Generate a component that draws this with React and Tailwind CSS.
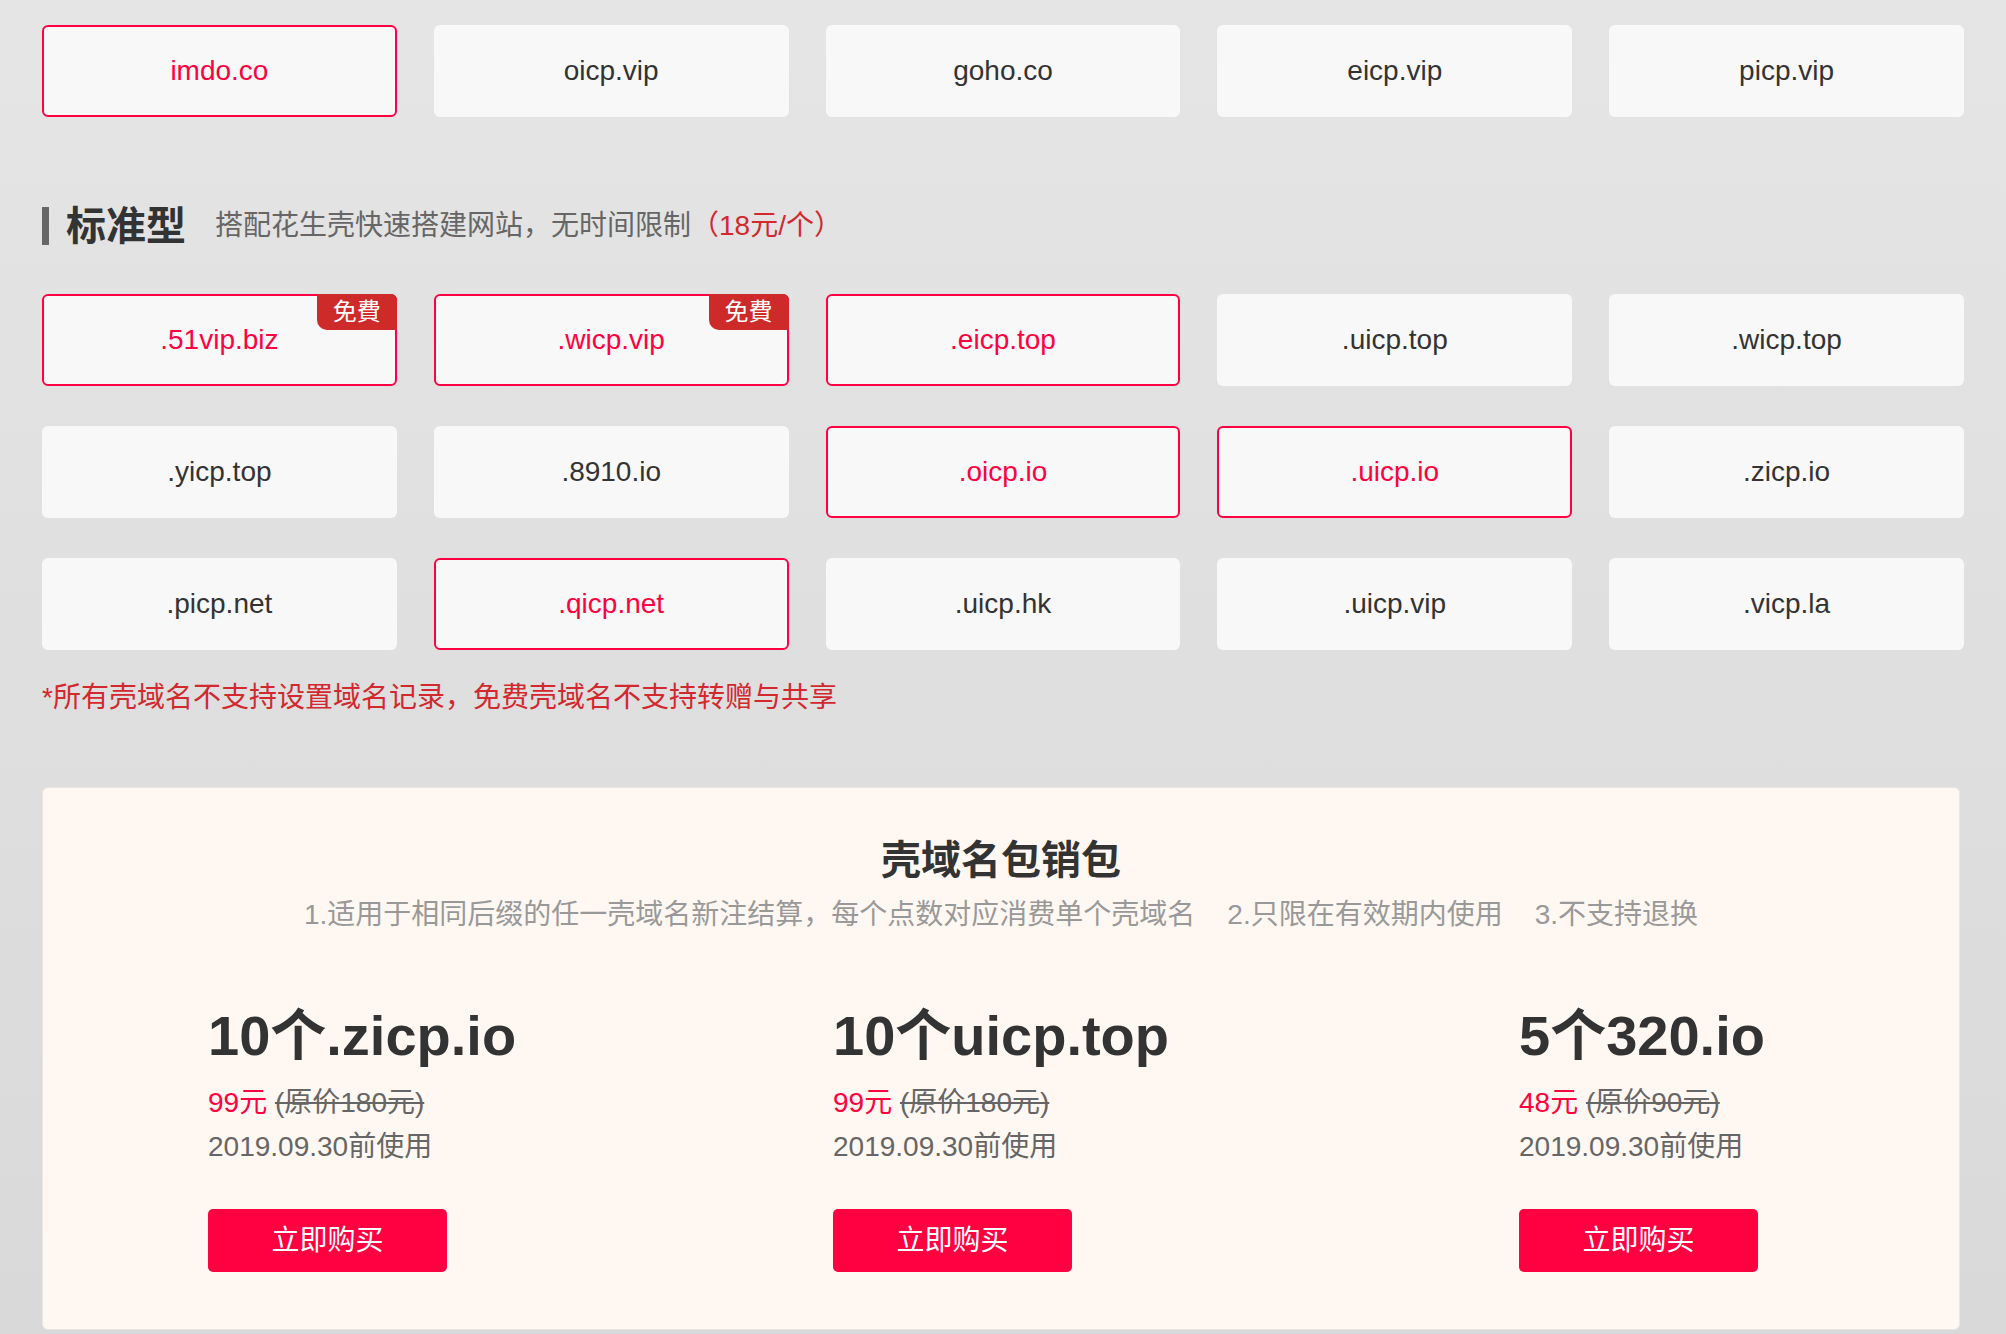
import React from "react";

const top = [
  { name: "imdo.co", on: true },
  { name: "oicp.vip" },
  { name: "goho.co" },
  { name: "eicp.vip" },
  { name: "picp.vip" },
];

const std = [
  { name: ".51vip.biz", on: true, free: true },
  { name: ".wicp.vip", on: true, free: true },
  { name: ".eicp.top", on: true },
  { name: ".uicp.top" },
  { name: ".wicp.top" },
  { name: ".yicp.top" },
  { name: ".8910.io" },
  { name: ".oicp.io", on: true },
  { name: ".uicp.io", on: true },
  { name: ".zicp.io" },
  { name: ".picp.net" },
  { name: ".qicp.net", on: true },
  { name: ".uicp.hk" },
  { name: ".uicp.vip" },
  { name: ".vicp.la" },
];

function Card({ item }) {
  return (
    <div
      className={
        "relative h-[92px] rounded-[6px] bg-[#f8f8f8] flex items-center justify-center text-[28px] " +
        (item.on ? "border-2 border-[#ff0040] text-[#ff0040]" : "text-[#333]")
      }
    >
      <span>{item.name}</span>
      {item.free && (
        <span className="absolute -top-[2px] -right-[2px] w-[80px] h-[36px] bg-[#cf2a2a] rounded-tr-[6px] rounded-bl-[10px] text-white text-[24px] leading-[36px] flex items-center justify-center">
          免費
        </span>
      )}
    </div>
  );
}

function Pack({ title, price, orig, w }) {
  return (
    <div className={w}>
      <div className="text-[56px] leading-[64px] font-bold text-[#333]">{title}</div>
      <div className="mt-[17px] text-[28px] leading-[36px]">
        <span className="text-[#ff0040]">{price}</span>{" "}
        <span className="text-[#666] line-through">{orig}</span>
      </div>
      <div className="mt-[8px] text-[28px] leading-[36px] text-[#666]">2019.09.30前使用</div>
      <button className="mt-[44px] w-[239px] h-[63px] rounded-[5px] bg-[#ff0040] text-white text-[28px] flex items-center justify-center">
        立即购买
      </button>
    </div>
  );
}

export default function App() {
  return (
    <div
      className="min-h-screen bg-gradient-to-b from-[#e5e5e5] to-[#d9d9d9]"
      style={{ fontFamily: '"Liberation Sans", "Noto Sans CJK SC", sans-serif' }}
    >
      <div className="px-[42px] pt-[25px] pb-[4px]">
        <div className="grid grid-cols-5 gap-x-[37px]">
          {top.map((t) => (
            <Card key={t.name} item={t} />
          ))}
        </div>

        <div className="mt-[89px] flex items-center h-[40px]">
          <div className="w-[7px] h-[38px] bg-[#666]" />
          <div className="ml-[17px] text-[40px] leading-[40px] font-bold text-[#333]">标准型</div>
          <div className="ml-[29px] text-[28px] leading-[40px] text-[#666]">
            搭配花生壳快速搭建网站，无时间限制<span className="text-[#d2282e]">（18元/个）</span>
          </div>
        </div>

        <div className="mt-[48px] grid grid-cols-5 gap-x-[37px] gap-y-[40px]">
          {std.map((t) => (
            <Card key={t.name} item={t} />
          ))}
        </div>

        <div className="mt-[30px] text-[28px] leading-[36px] text-[#d2282e]">
          *所有壳域名不支持设置域名记录，免费壳域名不支持转赠与共享
        </div>

        <div className="mt-[71px] mr-[4px] rounded-[6px] border border-[#ebe6e2] bg-[#fff8f2] pt-[48px] pb-[57px]">
          <div className="text-center text-[40px] leading-[48px] font-bold text-[#333]">壳域名包销包</div>
          <div className="mt-[13px] flex justify-center gap-x-[32px] text-[28px] leading-[36px] text-[#999]">
            <span>1.适用于相同后缀的任一壳域名新注结算，每个点数对应消费单个壳域名</span>
            <span>2.只限在有效期内使用</span>
            <span>3.不支持退换</span>
          </div>
          <div className="mt-[71px] flex pl-[165px]">
            <Pack w="w-[625px]" title="10个.zicp.io" price="99元" orig="(原价180元)" />
            <Pack w="w-[686px]" title="10个uicp.top" price="99元" orig="(原价180元)" />
            <Pack w="flex-1" title="5个320.io" price="48元" orig="(原价90元)" />
          </div>
        </div>
      </div>
    </div>
  );
}
